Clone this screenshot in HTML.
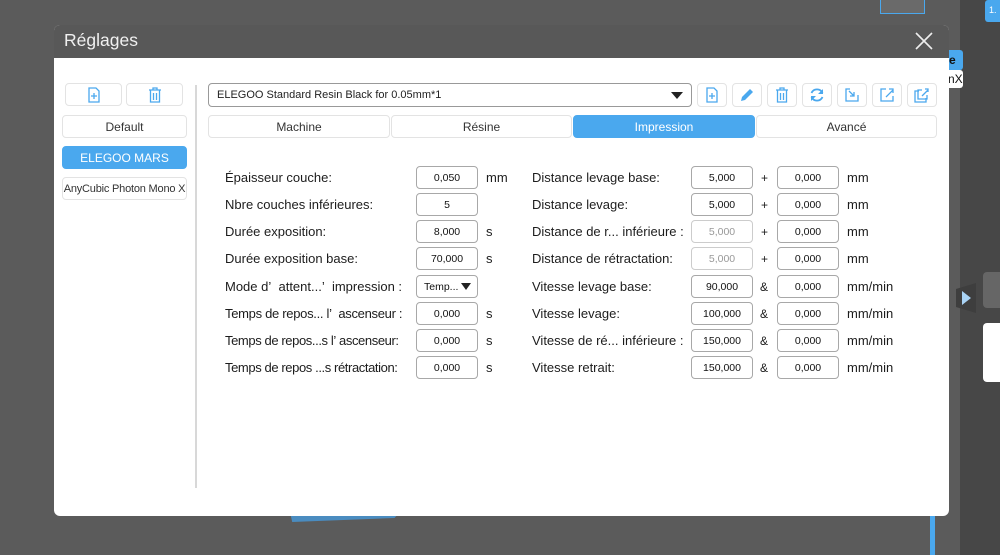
<!DOCTYPE html>
<html><head><meta charset="utf-8"><style>
*{margin:0;padding:0;box-sizing:border-box}
body{width:1000px;height:555px;overflow:hidden;background:#5b5b5b;font-family:"Liberation Sans",sans-serif;position:relative;color:#222}
.a{position:absolute}
.btn{position:absolute;border:1px solid #e3e3e3;border-radius:4px;background:#fff;display:flex;align-items:center;justify-content:center;font-size:12px;color:#333}
.in{position:absolute;width:62px;height:23px;border:1px solid #a8a8a8;border-radius:4px;background:#fff;font-size:10.5px;display:flex;align-items:center;justify-content:center;color:#111}
.lb{position:absolute;font-size:13px;color:#1c1c1c;white-space:nowrap;line-height:16px}
svg{display:block}
</style></head><body>
<div class="a" style="left:960px;top:0;width:40px;height:555px;background:#474747"></div>
<div class="a" style="left:985px;top:0;width:15px;height:22px;background:#4aa8ee;border-radius:3px 0 0 3px;color:#fff;font-size:9px;padding:5px 0 0 4px">1.</div>
<div class="a" style="left:880px;top:0;width:45px;height:14px;background:#6a6a6a;border:1px solid #4aa8ee;border-top:none"></div>
<div class="a" style="left:940px;top:50px;width:23px;height:20px;background:#4aa8ee;border-radius:3px;color:#111;font-size:12px;padding:3px 0 0 9px;font-weight:bold">e</div>
<div class="a" style="left:940px;top:70px;width:23px;height:18px;background:#fff;border-radius:3px;color:#111;font-size:12px;padding:2px 0 0 8px">nX</div>
<div class="a" style="left:956px;top:283px;width:20px;height:30px;background:#3e3e3e;clip-path:polygon(0 20%,100% 0,100% 100%,0 80%)"></div>
<div class="a" style="left:962px;top:291px;width:0;height:0;border-left:9px solid #a9d3f5;border-top:7px solid transparent;border-bottom:7px solid transparent"></div>
<div class="a" style="left:983px;top:272px;width:17px;height:36px;background:#666;border-radius:4px 0 0 4px"></div>
<div class="a" style="left:983px;top:323px;width:17px;height:59px;background:#fff;border-radius:4px 0 0 4px"></div>
<div class="a" style="left:930px;top:512px;width:5px;height:43px;background:#4aa8ee"></div>
<div class="a" style="left:290px;top:512px;width:110px;height:10px;background:#4a8cc0;clip-path:polygon(0 0,100% 0,95% 60%,2% 100%)"></div>

<div class="a" style="left:54px;top:25px;width:895px;height:491px;background:#fff;border-radius:6px;overflow:hidden">
 <div class="a" style="left:0;top:0;width:895px;height:33px;background:#585858"></div>
 <div class="a" style="left:10px;top:5px;font-size:17.5px;color:#f0f0f0">Réglages</div>
 <svg class="a" style="left:860px;top:6px" width="20" height="20"><path d="M2 2L18 18M18 2L2 18" stroke="#eee" stroke-width="1.6"/></svg>
</div>

<div class="btn" style="left:65px;top:83px;width:57px;height:23px"><svg width="14" height="16"><path d="M2 1h7l3 3v11H2z" fill="none" stroke="#4aa8ee" stroke-width="1.3"/><path d="M7 6v6M4 9h6" stroke="#4aa8ee" stroke-width="1.3"/></svg></div>
<div class="btn" style="left:126px;top:83px;width:57px;height:23px"><svg width="14" height="16"><path d="M1 3h12M5 3V1h4v2M2.5 3v12h9V3M5.5 6v7M8.5 6v7" fill="none" stroke="#4aa8ee" stroke-width="1.3"/></svg></div>
<div class="btn" style="left:62px;top:115px;width:125px;height:23px">Default</div>
<div class="btn" style="left:62px;top:146px;width:125px;height:23px;background:#4aa8ee;border-color:#4aa8ee;color:#fff">ELEGOO MARS</div>
<div class="btn" style="left:62px;top:177px;width:125px;height:23px;white-space:nowrap;overflow:hidden;font-size:11px;letter-spacing:-0.2px">AnyCubic Photon Mono X</div>
<div class="a" style="left:195px;top:85px;width:2px;height:403px;background:#d8d8d8"></div>

<div class="a" style="left:208px;top:83px;width:484px;height:24px;border:1px solid #999;border-radius:4px;font-size:11px;padding:5px 0 0 8px">ELEGOO Standard Resin Black for 0.05mm*1</div>
<div class="a" style="left:671px;top:92px;border-top:7px solid #222;border-left:6px solid transparent;border-right:6px solid transparent"></div>

<div class="btn" style="left:697px;top:83px;width:30px;height:24px"><svg width="14" height="16"><path d="M2 1h7l3 3v11H2z" fill="none" stroke="#4aa8ee" stroke-width="1.3"/><path d="M7 6v6M4 9h6" stroke="#4aa8ee" stroke-width="1.3"/></svg></div>
<div class="btn" style="left:732px;top:83px;width:30px;height:24px"><svg width="16" height="16"><path d="M2 14l1-4 8-8 3 3-8 8z" fill="#4aa8ee"/></svg></div>
<div class="btn" style="left:767px;top:83px;width:30px;height:24px"><svg width="14" height="16"><path d="M1 3h12M5 3V1h4v2M2.5 3v12h9V3M5.5 6v7M8.5 6v7" fill="none" stroke="#4aa8ee" stroke-width="1.3"/></svg></div>
<div class="btn" style="left:802px;top:83px;width:30px;height:24px"><svg width="16" height="16"><path d="M13.5 6A6 6 0 0 0 2.5 6M2.5 10a6 6 0 0 0 11 0" fill="none" stroke="#4aa8ee" stroke-width="1.8"/><path d="M14 2v5h-5zM2 14V9h5z" fill="#4aa8ee"/></svg></div>
<div class="btn" style="left:837px;top:83px;width:30px;height:24px"><svg width="16" height="16"><path d="M6 2H2v12h12V8M5 4l5 5M10 5v4H6" fill="none" stroke="#4aa8ee" stroke-width="1.3"/></svg></div>
<div class="btn" style="left:872px;top:83px;width:30px;height:24px"><svg width="16" height="16"><path d="M7 2H2v12h12V9M7 10l7-7M10 2h4v4" fill="none" stroke="#4aa8ee" stroke-width="1.3"/></svg></div>
<div class="btn" style="left:907px;top:83px;width:30px;height:24px"><svg width="16" height="16"><path d="M5 4H1v11h11v-4M8 3H4v9h9V8M8 9l6-6M11 2h3v3" fill="none" stroke="#4aa8ee" stroke-width="1.3"/></svg></div>

<div class="btn" style="left:208px;top:115px;width:182px;height:23px">Machine</div>
<div class="btn" style="left:391px;top:115px;width:181px;height:23px">Résine</div>
<div class="btn" style="left:573px;top:115px;width:182px;height:23px;background:#4aa8ee;border-color:#4aa8ee;color:#fff">Impression</div>
<div class="btn" style="left:756px;top:115px;width:181px;height:23px">Avancé</div>

<div class="lb" style="left:225px;top:170px">Épaisseur couche:</div>
<div class="lb" style="left:225px;top:197px">Nbre couches inférieures:</div>
<div class="lb" style="left:225px;top:224px">Durée exposition:</div>
<div class="lb" style="left:225px;top:251px">Durée exposition base:</div>
<div class="lb" style="left:225px;top:279px">Mode d’&nbsp;&nbsp;attent...’&nbsp;&nbsp;impression :</div>
<div class="lb" style="left:225px;top:306px;letter-spacing:-0.3px">Temps de repos... l’&nbsp;&nbsp;ascenseur :</div>
<div class="lb" style="left:225px;top:333px;letter-spacing:-0.4px">Temps de repos...s l’&nbsp;ascenseur:</div>
<div class="lb" style="left:225px;top:360px;letter-spacing:-0.4px">Temps de repos ...s rétractation:</div>

<div class="in" style="left:416px;top:166px">0,050</div>
<div class="in" style="left:416px;top:193px">5</div>
<div class="in" style="left:416px;top:220px">8,000</div>
<div class="in" style="left:416px;top:247px">70,000</div>
<div class="in" style="left:416px;top:275px;justify-content:flex-start;padding-left:7px">Temp...<span style="margin-left:3px;border-top:7px solid #222;border-left:5px solid transparent;border-right:5px solid transparent;width:0;height:0"></span></div>
<div class="in" style="left:416px;top:302px">0,000</div>
<div class="in" style="left:416px;top:329px">0,000</div>
<div class="in" style="left:416px;top:356px">0,000</div>

<div class="lb" style="left:486px;top:170px">mm</div>
<div class="lb" style="left:486px;top:224px">s</div>
<div class="lb" style="left:486px;top:251px">s</div>
<div class="lb" style="left:486px;top:306px">s</div>
<div class="lb" style="left:486px;top:333px">s</div>
<div class="lb" style="left:486px;top:360px">s</div>

<div class="lb" style="left:532px;top:170px">Distance levage base:</div>
<div class="lb" style="left:532px;top:197px">Distance levage:</div>
<div class="lb" style="left:532px;top:224px">Distance de r... inférieure :</div>
<div class="lb" style="left:532px;top:251px">Distance de rétractation:</div>
<div class="lb" style="left:532px;top:279px">Vitesse levage base:</div>
<div class="lb" style="left:532px;top:306px">Vitesse levage:</div>
<div class="lb" style="left:532px;top:333px">Vitesse de ré... inférieure :</div>
<div class="lb" style="left:532px;top:360px">Vitesse retrait:</div>

<div class="in" style="left:691px;top:166px">5,000</div>
<div class="in" style="left:691px;top:193px">5,000</div>
<div class="in" style="left:691px;top:220px;border-color:#ccc;color:#999">5,000</div>
<div class="in" style="left:691px;top:247px;border-color:#ccc;color:#999">5,000</div>
<div class="in" style="left:691px;top:275px">90,000</div>
<div class="in" style="left:691px;top:302px">100,000</div>
<div class="in" style="left:691px;top:329px">150,000</div>
<div class="in" style="left:691px;top:356px">150,000</div>

<div class="lb" style="left:761px;top:170px;font-size:12px">+</div>
<div class="lb" style="left:761px;top:197px;font-size:12px">+</div>
<div class="lb" style="left:761px;top:224px;font-size:12px">+</div>
<div class="lb" style="left:761px;top:251px;font-size:12px">+</div>
<div class="lb" style="left:760px;top:279px;font-size:12px">&amp;</div>
<div class="lb" style="left:760px;top:306px;font-size:12px">&amp;</div>
<div class="lb" style="left:760px;top:333px;font-size:12px">&amp;</div>
<div class="lb" style="left:760px;top:360px;font-size:12px">&amp;</div>

<div class="in" style="left:777px;top:166px">0,000</div>
<div class="in" style="left:777px;top:193px">0,000</div>
<div class="in" style="left:777px;top:220px">0,000</div>
<div class="in" style="left:777px;top:247px">0,000</div>
<div class="in" style="left:777px;top:275px">0,000</div>
<div class="in" style="left:777px;top:302px">0,000</div>
<div class="in" style="left:777px;top:329px">0,000</div>
<div class="in" style="left:777px;top:356px">0,000</div>

<div class="lb" style="left:847px;top:170px">mm</div>
<div class="lb" style="left:847px;top:197px">mm</div>
<div class="lb" style="left:847px;top:224px">mm</div>
<div class="lb" style="left:847px;top:251px">mm</div>
<div class="lb" style="left:847px;top:279px">mm/min</div>
<div class="lb" style="left:847px;top:306px">mm/min</div>
<div class="lb" style="left:847px;top:333px">mm/min</div>
<div class="lb" style="left:847px;top:360px">mm/min</div>
</body></html>
